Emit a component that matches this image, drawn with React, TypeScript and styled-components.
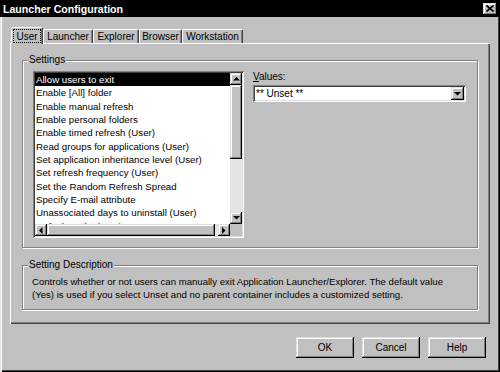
import React from "react";
import styled, { createGlobalStyle, css } from "styled-components";

const Global = createGlobalStyle`
  html, body { margin: 0; padding: 0; background: #c0c0c0; }
  body { font-family: "Liberation Sans", Arial, sans-serif; }
`;

const raised = css`
  box-shadow: inset -1px -1px 0 #000, inset 1px 1px 0 #dfdfdf, inset -2px -2px 0 #808080, inset 2px 2px 0 #fff;
`;
const sunken = css`
  box-shadow: inset 1px 1px 0 #808080, inset -1px -1px 0 #fff, inset 2px 2px 0 #404040, inset -2px -2px 0 #dfdfdf;
`;

const Window = styled.div`
  width: 500px;
  height: 372px;
  box-sizing: border-box;
  background: #c0c0c0;
  display: flex;
  flex-direction: column;
  box-shadow: inset 1px 1px 0 #dfdfdf, inset 2px 2px 0 #fff, inset -1px -1px 0 #000, inset -2px -2px 0 #404040;
  font-family: "Liberation Sans", Arial, sans-serif;
  font-size: 10px;
  color: #000;
`;

const TitleBar = styled.div`
  height: 17px;
  flex: none;
  background: #000;
  color: #fff;
  display: flex;
  align-items: center;
  justify-content: space-between;
  padding: 0 3px 0 3px;
  font-weight: bold;
  font-size: 10.6px;
`;

const CloseButton = styled.div`
  width: 14px;
  height: 12px;
  background: #c0c0c0;
  ${raised};
  display: flex;
  align-items: center;
  justify-content: center;
`;

const Body = styled.div`
  display: flex;
  flex-direction: column;
  padding: 10px 10px 0 10px;
`;

const TabRow = styled.div`
  display: flex;
  align-items: flex-end;
  height: 16px;
  padding-left: 1px;
`;

const Tab = styled.div<{ $w: number; $active?: boolean }>`
  position: relative;
  z-index: 1;
  width: ${(p) => p.$w}px;
  height: ${(p) => (p.$active ? 17 : 14)}px;
  margin-bottom: ${(p) => (p.$active ? -1 : 0)}px;
  box-sizing: border-box;
  background: #c0c0c0;
  border-top: 1px solid #fff;
  border-left: 1px solid #fff;
  border-right: 1px solid #404040;
  border-radius: 2px 2px 0 0;
  box-shadow: inset -1px 0 0 #808080;
  display: flex;
  align-items: ${(p) => (p.$active ? "stretch" : "center")};
  justify-content: center;
  padding: ${(p) => (p.$active ? "1px 1px 1px 1px" : "0")};
  font-size: 10px;
`;

const FocusRect = styled.span`
  flex: 1;
  display: flex;
  align-items: center;
  justify-content: center;
  outline: 1px dotted #000;
  outline-offset: -1px;
`;

const Panel = styled.div`
  height: 281px;
  box-sizing: border-box;
  box-shadow: inset 1px 1px 0 #fff, inset -1px -1px 0 #404040, inset -2px -2px 0 #808080;
  padding: 11px 12px 0 12px;
  display: flex;
  flex-direction: column;
`;

const Group = styled.fieldset<{ $gap?: number }>`
  margin: ${(p) => p.$gap ?? 0}px 0 0 0;
  padding: 0;
  border: 1px solid #808080;
  box-shadow: 1px 1px 0 #fff, inset 1px 1px 0 #fff;
  min-width: 0;
`;

const Legend = styled.legend`
  margin-left: 5px;
  padding: 0 1px;
  font-size: 10px;
  line-height: 12px;
  background: #c0c0c0;
`;

const SettingsBody = styled.div`
  display: flex;
  padding: 5px 10px 9px 10px;
`;

const ListBox = styled.div`
  width: 211px;
  height: 167px;
  flex: none;
  box-sizing: border-box;
  padding: 2px;
  background: #fff;
  ${sunken};
  display: grid;
  grid-template-columns: 1fr 12px;
  grid-template-rows: 1fr 12px;
`;

const Rows = styled.div`
  overflow: hidden;
`;

const Row = styled.div<{ $selected?: boolean }>`
  height: 13.33px;
  line-height: 13px;
  padding-left: 1px;
  white-space: nowrap;
  font-size: 9.7px;
  background: ${(p) => (p.$selected ? "#000" : "transparent")};
  color: ${(p) => (p.$selected ? "#fff" : "#000")};
`;

const VScroll = styled.div`
  display: flex;
  flex-direction: column;
  background: #e4e4e4;
`;

const HScroll = styled.div`
  display: flex;
  background: #e4e4e4;
`;

const ScrollBtn = styled.div<{ $len?: number }>`
  flex: none;
  width: ${(p) => p.$len ?? 12}px;
  height: ${(p) => p.$len ?? 12}px;
  background: #c0c0c0;
  box-sizing: border-box;
  ${raised};
  display: flex;
  align-items: center;
  justify-content: center;
`;

const Thumb = styled.div<{ $v?: boolean; $len: number }>`
  flex: none;
  ${(p) => (p.$v ? `height: ${p.$len}px;` : `width: ${p.$len}px;`)}
  background: #c0c0c0;
  ${raised};
`;

const Track = styled.div`
  flex: 1;
`;

const Corner = styled.div`
  background: #c0c0c0;
`;

const ValuesCol = styled.div`
  display: flex;
  flex-direction: column;
  margin-left: 9px;
`;

const Label = styled.div`
  font-size: 10px;
  line-height: 12px;
  margin-bottom: 2px;
`;

const Combo = styled.div`
  width: 213px;
  height: 17px;
  box-sizing: border-box;
  padding: 2px;
  background: #fff;
  ${sunken};
  display: flex;
  align-items: center;
`;

const ComboText = styled.span`
  flex: 1;
  padding-left: 1px;
  font-size: 10px;
`;

const DescText = styled.div`
  padding: 4px 9px 8px 9px;
  font-size: 9.6px;
  line-height: 13px;
`;

const ButtonRow = styled.div`
  display: flex;
  justify-content: flex-end;
  gap: 8px;
  padding-right: 4px;
  margin-top: 13px;
`;

const Button = styled.div`
  width: 58px;
  height: 21px;
  box-sizing: border-box;
  background: #c0c0c0;
  ${raised};
  display: flex;
  align-items: center;
  justify-content: center;
  font-size: 10px;
`;

const Arrow = ({ dir }: { dir: "up" | "down" | "left" | "right" }) => {
  const pts = {
    up: "3.5,0 7,3.5 0,3.5",
    down: "0,0 7,0 3.5,3.5",
    left: "3.5,0 3.5,7 0,3.5",
    right: "0,0 3.5,3.5 0,7",
  }[dir];
  const vert = dir === "up" || dir === "down";
  return (
    <svg width={vert ? 7 : 4} height={vert ? 4 : 7} viewBox={vert ? "0 0 7 4" : "0 0 4 7"}>
      <polygon points={pts} fill="#000" />
    </svg>
  );
};

const items = [
  "Allow users to exit",
  "Enable [All] folder",
  "Enable manual refresh",
  "Enable personal folders",
  "Enable timed refresh (User)",
  "Read groups for applications (User)",
  "Set application inheritance level (User)",
  "Set refresh frequency (User)",
  "Set the Random Refresh Spread",
  "Specify E-mail attribute",
  "Unassociated days to uninstall (User)",
  "Default cache location",
];

const tabs = [
  { label: "User", w: 32 },
  { label: "Launcher", w: 50 },
  { label: "Explorer", w: 46 },
  { label: "Browser", w: 43 },
  { label: "Workstation", w: 61 },
];

export default function App() {
  return (
    <>
      <Global />
      <Window>
        <TitleBar>
          <span>Launcher Configuration</span>
          <CloseButton>
            <svg width="8" height="7" viewBox="0 0 8 7">
              <path d="M0.5 0.5 L7.5 6.5 M7.5 0.5 L0.5 6.5" stroke="#000" strokeWidth="1.6" />
            </svg>
          </CloseButton>
        </TitleBar>
        <Body>
          <TabRow>
            {tabs.map((t, i) => (
              <Tab key={t.label} $w={t.w} $active={i === 0}>
                {i === 0 ? <FocusRect>{t.label}</FocusRect> : t.label}
              </Tab>
            ))}
          </TabRow>
          <Panel>
            <Group>
              <Legend>Settings</Legend>
              <SettingsBody>
                <ListBox>
                  <Rows>
                    {items.map((it, i) => (
                      <Row key={it} $selected={i === 0}>
                        {it}
                      </Row>
                    ))}
                  </Rows>
                  <VScroll>
                    <ScrollBtn>
                      <Arrow dir="up" />
                    </ScrollBtn>
                    <Thumb $v $len={74} />
                    <Track />
                    <ScrollBtn>
                      <Arrow dir="down" />
                    </ScrollBtn>
                  </VScroll>
                  <HScroll>
                    <ScrollBtn>
                      <Arrow dir="left" />
                    </ScrollBtn>
                    <Thumb $len={168} />
                    <Track />
                    <ScrollBtn>
                      <Arrow dir="right" />
                    </ScrollBtn>
                  </HScroll>
                  <Corner />
                </ListBox>
                <ValuesCol>
                  <Label>
                    <u>V</u>alues:
                  </Label>
                  <Combo>
                    <ComboText>** Unset **</ComboText>
                    <ScrollBtn $len={13}>
                      <Arrow dir="down" />
                    </ScrollBtn>
                  </Combo>
                </ValuesCol>
              </SettingsBody>
            </Group>
            <Group $gap={11}>
              <Legend>Setting Description</Legend>
              <DescText>
                Controls whether or not users can manually exit Application Launcher/Explorer. The default value
                <br />
                (Yes) is used if you select Unset and no parent container includes a customized setting.
              </DescText>
            </Group>
          </Panel>
          <ButtonRow>
            <Button>OK</Button>
            <Button>Cancel</Button>
            <Button>Help</Button>
          </ButtonRow>
        </Body>
      </Window>
    </>
  );
}
